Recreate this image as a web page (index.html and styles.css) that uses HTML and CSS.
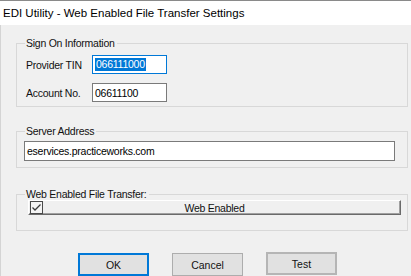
FILE: index.html
```html
<!DOCTYPE html>
<html>
<head>
<meta charset="utf-8">
<link rel="stylesheet" href="styles.css">
</head>
<body>
<div class="window">
  <div class="titlebar">EDI Utility - Web Enabled File Transfer Settings</div>
  <div class="content">
    <section class="group group-signon">
      <div class="legend">Sign On Information</div>
      <div class="group-body">
        <div class="row">
          <span class="label">Provider TIN</span>
          <span class="textbox short focused"><span class="sel">066111000</span></span>
        </div>
        <div class="row">
          <span class="label">Account No.</span>
          <span class="textbox short">06611100</span>
        </div>
      </div>
    </section>
    <section class="group group-server">
      <div class="legend">Server Address</div>
      <div class="group-body">
        <span class="textbox wide">eservices.practiceworks.com</span>
      </div>
    </section>
    <section class="group group-web">
      <div class="legend">Web Enabled File Transfer:</div>
      <div class="group-body">
        <div class="bevel-btn">
          <svg class="check" width="13" height="13" viewBox="0 0 13 13">
            <rect x="0.5" y="0.5" width="12" height="12" fill="#f4f4f4" stroke="#4a4a4a"/>
            <path d="M2.5 6.5 L5 9 L10.5 3.5" fill="none" stroke="#3a3a3a" stroke-width="1.3"/>
          </svg>
          <span class="bevel-text">Web Enabled</span>
        </div>
      </div>
    </section>
    <div class="buttons">
      <div class="btn default">OK</div>
      <div class="btn">Cancel</div>
      <div class="btn test">Test</div>
    </div>
  </div>
</div>
</body>
</html>
```
FILE: styles.css
```css
* { box-sizing: border-box; }
html, body {
  margin: 0;
  padding: 0;
  width: 411px;
  height: 276px;
  overflow: hidden;
  background: #f0f0f0;
  font-family: "Liberation Sans", Arial, sans-serif;
  font-size: 10.5px;
  letter-spacing: -0.25px;
  color: #111;
}
.window { display: flex; flex-direction: column; height: 276px; }
.titlebar {
  height: 26px;
  background: #ffffff;
  border-top: 1px solid #8a8a8a;
  padding-left: 3px;
  display: flex;
  align-items: center;
  font-size: 11.5px;
  letter-spacing: 0;
  color: #000;
}
.content {
  flex: 1;
  padding: 18px 4px 0 15px;
  border-left: 1px solid #d4d4d4;
  display: flex;
  flex-direction: column;
}
.group {
  border: 1px solid #d8d8d8;
  width: 392px;
}
.legend {
  align-self: flex-start;
  width: fit-content;
  line-height: 12px;
  height: 12px;
  margin: -7px 0 0 8px;
  padding: 0 2px 0 1px;
  background: #f0f0f0;
  color: #111;
}
.group-signon .legend { margin-bottom: 6px; }
.group-signon .group-body {
  padding: 0 0 4px 9px;
  display: flex;
  flex-direction: column;
  gap: 9px;
}
.group-server { margin-top: 24px; }
.group-server .legend { margin-bottom: 4px; }
.group-server .group-body { padding: 0 0 6px 7px; }
.group-web { margin-top: 26px; }
.group-web .group-body { padding: 0 0 15px 11px; }
.row { display: flex; align-items: center; }
.label { width: 66px; }
.textbox {
  display: flex;
  align-items: center;
  height: 19px;
  background: #ffffff;
  border: 1px solid #7a7a7a;
  padding-left: 2px;
  color: #000;
}
.textbox.short { width: 75px; }
.textbox.focused { border-color: #0078d7; }
.textbox.wide { width: 371px; height: 20px; }
.sel {
  background: #0078d7;
  color: #fff;
  line-height: 13px;
  padding: 0 1px;
}
.bevel-btn {
  position: relative;
  height: 15px;
  width: 373px;
  border-top: 1px solid #ffffff;
  border-left: 1px solid #ffffff;
  border-right: 1px solid #6a6a6a;
  border-bottom: 1px solid #6a6a6a;
  box-shadow: inset -1px -1px 0 #a0a0a0;
  display: flex;
  align-items: center;
  justify-content: center;
}
.check { position: absolute; left: 1px; top: 0; }
.bevel-text { color: #111; }
.buttons {
  display: flex;
  gap: 23px;
  padding-left: 62px;
  margin-top: 22px;
}
.btn {
  width: 71px;
  height: 23px;
  background: #e1e1e1;
  border: 1px solid #adadad;
  display: flex;
  align-items: center;
  justify-content: center;
  color: #111;
  letter-spacing: 0;
}
.btn.default { border: 2px solid #0078d7; }
.btn.test { border: 2px solid #b5b5b5; margin-top: -1px; }
```
